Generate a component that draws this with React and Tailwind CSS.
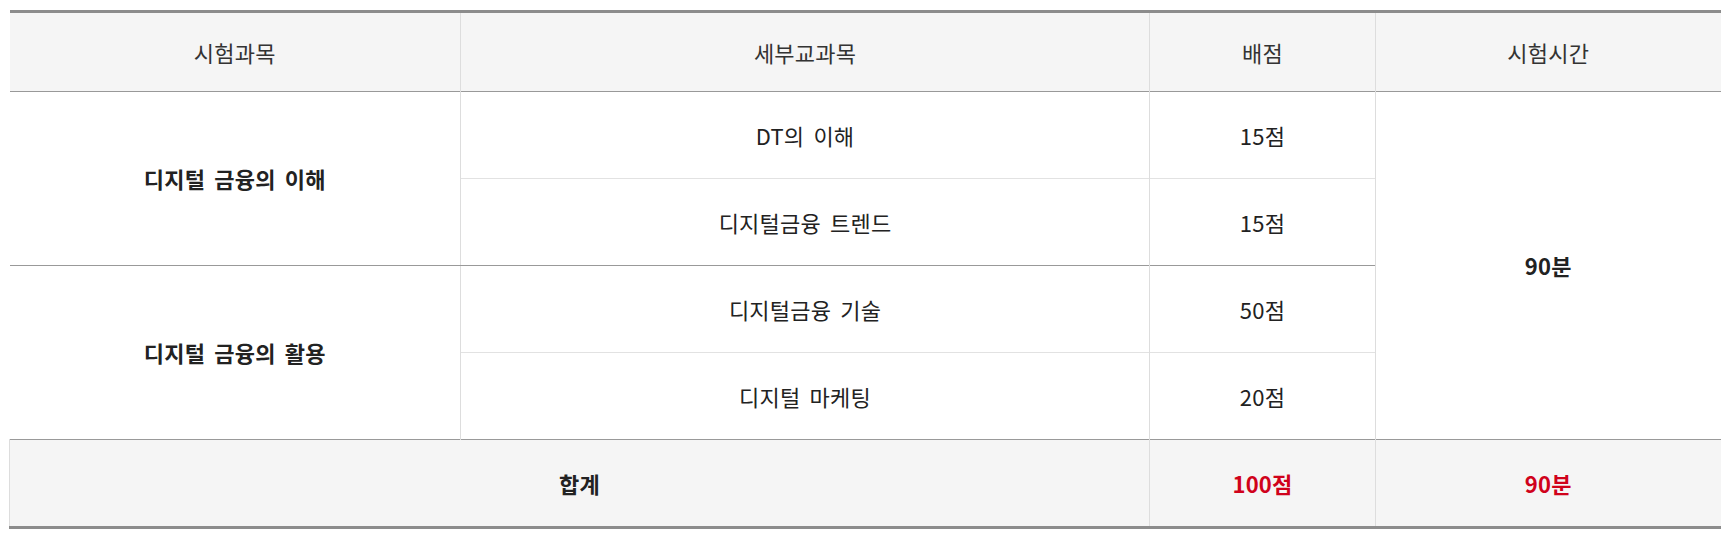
export default function App() {
  const th = "h-[80px] border-l border-[#dddddd] first:border-l-0 font-normal text-[22px] text-[#333]";
  const td = "h-[87px] border-l border-[#dddddd] text-[22px] text-[#222] text-center";

  return (
    <div
      className="bg-white w-[1733px] h-[544px] pt-[10px] pl-[9px] [word-spacing:4px] tracking-[0.2px]"
      style={{ fontFamily: '"Noto Sans CJK KR", "Noto Sans", sans-serif' }}
    >
      <table className="w-[1711px] border-collapse table-fixed border-t-[3px] border-b-[3px] border-t-[#8c8c8c] border-b-[#8c8c8c]">
        <colgroup>
          <col className="w-[451px]" />
          <col className="w-[689px]" />
          <col className="w-[226px]" />
          <col className="w-[345px]" />
        </colgroup>
        <thead>
          <tr className="bg-[#f5f5f5] border-b border-[#999999]">
            <th className={th}>시험과목</th>
            <th className={th}>세부교과목</th>
            <th className={th}>배점</th>
            <th className={th}>시험시간</th>
          </tr>
        </thead>
        <tbody>
          {/* 디지털 금융의 이해 */}
          <tr className="border-b border-[#e2e2e2]">
            <td rowSpan={2} className={`${td} border-l-0 border-b border-b-[#999999] font-bold`}>디지털 금융의 이해</td>
            <td className={td}>DT의 이해</td>
            <td className={td}>15점</td>
            <td rowSpan={4} className={`${td} font-bold`}>90분</td>
          </tr>
          <tr className="border-b border-[#999999]">
            <td className={td}>디지털금융 트렌드</td>
            <td className={td}>15점</td>
          </tr>

          {/* 디지털 금융의 활용 */}
          <tr className="border-b border-[#e2e2e2]">
            <td rowSpan={2} className={`${td} border-l-0 font-bold`}>디지털 금융의 활용</td>
            <td className={td}>디지털금융 기술</td>
            <td className={td}>50점</td>
          </tr>
          <tr>
            <td className={td}>디지털 마케팅</td>
            <td className={td}>20점</td>
          </tr>

          {/* 합계 */}
          <tr className="bg-[#f5f5f5] border-t border-[#999999]">
            <td colSpan={2} className={`${td} h-[88px] border-l border-l-[#dddddd] font-bold`}>합계</td>
            <td className={`${td} h-[88px] font-bold text-[#d0021b]`}>100점</td>
            <td className={`${td} h-[88px] font-bold text-[#d0021b]`}>90분</td>
          </tr>
        </tbody>
      </table>
    </div>
  );
}
